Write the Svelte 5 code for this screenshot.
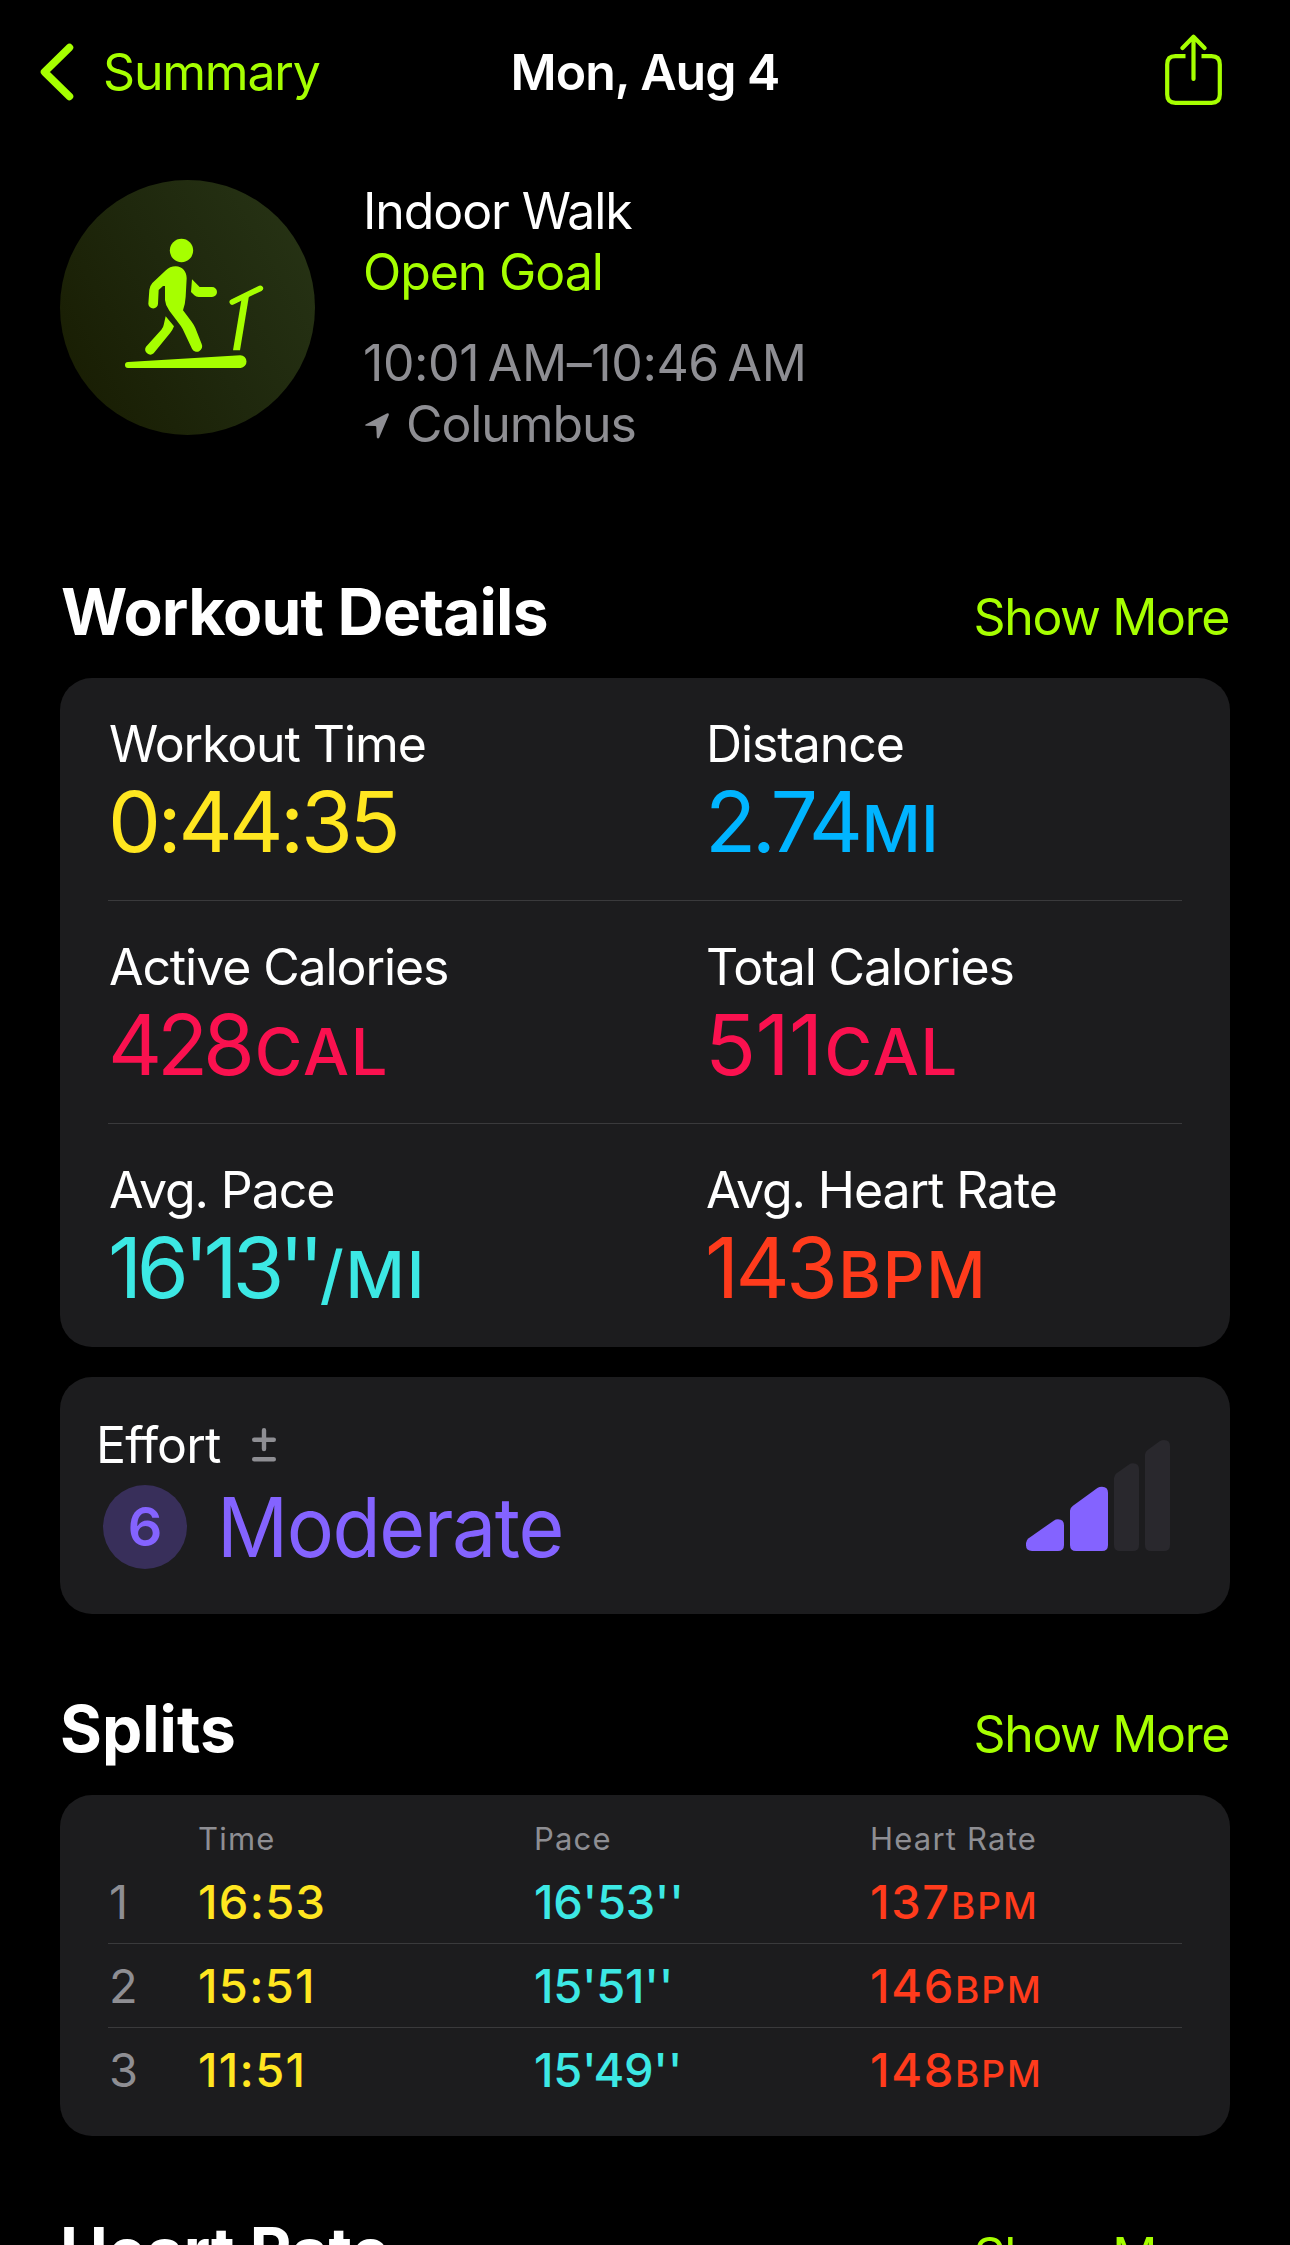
<script lang="ts">
  interface Metric {
    label: string;
    value: string;
    unit?: string;
    tone: string;
    tracking: number;
    gap?: number;
  }

  interface Split {
    time: string;
    pace: string;
    bpm: number;
  }

  const metrics: Metric[] = [
    { label: 'Workout Time', value: '0:44:35', tone: 'yellow', tracking: -3.4 },
    { label: 'Distance', value: '2.74', unit: 'MI', tone: 'blue', tracking: -4.4, gap: 3 },
    { label: 'Active Calories', value: '428', unit: 'CAL', tone: 'pink', tracking: -5.2, gap: 5 },
    { label: 'Total Calories', value: '511', unit: 'CAL', tone: 'pink', tracking: -0.6, gap: 2 },
    { label: 'Avg. Pace', value: "16'13''", unit: '/MI', tone: 'cyan', tracking: -5.3, gap: 1 },
    { label: 'Avg. Heart Rate', value: '143', unit: 'BPM', tone: 'red', tracking: -3.7, gap: 4 },
  ];

  const splits: Split[] = [
    { time: '16:53', pace: "16'53''", bpm: 137 },
    { time: '15:51', pace: "15'51''", bpm: 146 },
    { time: '11:51', pace: "15'49''", bpm: 148 },
  ];

  const effort = { score: 6, label: 'Moderate' };
  const effortBars = [
    { on: true, d: 'M216 573H294Q312 573 312 555V496Q312 478 294 478Q287 478 281 482L206 535Q198 541 198 549V556Q198 573 216 573Z' },
    { on: true, d: 'M348 573H426Q444 573 444 555V398Q444 380 426 380Q418 380 412 384L338 438Q330 444 330 452V555Q330 573 348 573Z' },
    { on: false, d: 'M480 573H519Q537 573 537 555V328Q537 310 519 310Q512 310 506 314L470 340Q462 346 462 354V555Q462 573 480 573Z' },
    { on: false, d: 'M573 573H612Q630 573 630 555V258Q630 240 612 240Q605 240 599 244L563 270Q555 276 555 284V555Q555 573 573 573Z' },
  ];
</script>

{#snippet sectionHead(title: string)}
  <div class="section-head">
    <h2 class:wide={title.length > 12}>{title}</h2>
    <a class="more" href="#more">Show More</a>
  </div>
{/snippet}

<div class="screen">
  <header class="nav">
    <a class="back" href="#summary">
      <svg width="34" height="58" viewBox="0 0 34 58" aria-hidden="true">
        <path d="M29.5 4.5 4.5 29l25 24.5" />
      </svg>
      <span>Summary</span>
    </a>
    <h1>Mon, Aug 4</h1>
    <button class="share" aria-label="Share">
      <svg width="57" height="72" viewBox="0 0 57 72" aria-hidden="true">
        <path d="M20.5 22.2H10.5Q2.2 22.2 2.2 30.5V60.5Q2.2 68.8 10.5 68.8H46.5Q54.8 68.8 54.8 60.5V30.5Q54.8 22.2 46.5 22.2H36.5" />
        <path class="arrow" d="M28.5 3V45M17.5 14 28.5 2.8 39.5 14" />
      </svg>
    </button>
  </header>

  <section class="hero">
    <div class="badge">
      <svg width="255" height="255" viewBox="60 60 765 765" aria-hidden="true">
        <circle cx="424.5" cy="271.5" r="35" />
        <!-- torso, near arm and front leg -->
        <path d="M407 319C427 319 440 335 440 355L437 410Q436 430 429 451L455 485Q461 493 466 504L485 552A16 16 0 0 1 456 566L428 507Q424 499 418 492L388 452Q376 436 375 420V378H369L356 390L354 431A14.5 14.5 0 0 1 325 431L328 390Q329 378 337 369L376 332Q390 319 407 319Z" />
        <!-- rear leg -->
        <path d="M377 469 402 499Q398 510 391 518L341 580A15.5 15.5 0 0 1 318 560L364 509Q370 502 371 495Z" />
        <!-- forward hand -->
        <path d="M456 358 479 381H516A15 15 0 0 1 516 411H476Q468 411 463 406L453 396Z" />
        <!-- treadmill -->
        <path class="rail" d="M577 426 661 385" />
        <path d="M605 415 627 407 600 571H579Z" />
        <path d="M264 606 601 585.5A19.3 19.3 0 0 1 602 624H264A9 9 0 0 1 264 606Z" />
      </svg>
    </div>
    <div class="summary">
      <p>Indoor Walk</p>
      <p class="goal">Open Goal</p>
      <p class="muted when">10:01&#8239;AM–10:46&#8239;AM</p>
      <p class="muted place">
        <svg width="24" height="26" viewBox="0 0 24 26" aria-hidden="true">
          <path d="M1 11.2 21.8.5Q24.4-.3 23.7 2.3L14.3 24.5Q13 26.500 11.8 24.5L11.3 14Q11.2 13 10.2 13L1 12.8Q-.8 12.2 1 11.2Z" />
        </svg>
        <span>Columbus</span>
      </p>
    </div>
  </section>

  {@render sectionHead('Workout Details')}
  <section class="card metrics">
    {#each metrics as m}
      <div class="metric">
        <div class="label">{m.label}</div>
        <div class="value {m.tone}">
          <span style="letter-spacing: {m.tracking}px">{m.value}</span>{#if m.unit}<span class="unit" class:long={m.unit.length > 2} style="margin-left: {m.gap}px">{m.unit}</span>{/if}
        </div>
      </div>
    {/each}
  </section>

  <section class="card effort">
    <div class="effort-main">
      <div class="effort-head">
        <span>Effort</span>
        <svg width="24" height="34" viewBox="0 0 24 34" aria-hidden="true">
          <path d="M2.2 11.7H21.8M12 2.3V21M2.2 31.2H21.8" />
        </svg>
      </div>
      <div class="effort-value">
        <span class="score">{effort.score}</span>
        <span class="level">{effort.label}</span>
      </div>
    </div>
    <svg width="144" height="111" viewBox="198 240 432 333" aria-hidden="true">
      {#each effortBars as bar}
        <path class="bar" class:on={bar.on} d={bar.d} />
      {/each}
    </svg>
  </section>

  {@render sectionHead('Splits')}
  <section class="card splits">
    <div class="split-row split-head">
      <span></span>
      <span>Time</span>
      <span>Pace</span>
      <span>Heart Rate</span>
    </div>
    {#each splits as s, i}
      <div class="split-row">
        <span class="index">{i + 1}</span>
        <span class="time yellow">{s.time}</span>
        <span class="pace cyan">{s.pace}</span>
        <span class="rate red">{s.bpm}<small>BPM</small></span>
      </div>
    {/each}
  </section>

  {@render sectionHead('Heart Rate')}
</div>

<style>
  :global(body) {
    background: #000;
  }

  .screen {
    --green: #a6ff00;
    --gray: #8e8e93;
    --violet: #8463ff;
    box-sizing: border-box;
    width: 1290px;
    height: 2245px;
    overflow: hidden;
    padding: 0 60px;
    background: #000;
    color: #fff;
    font-family: Inter, 'Liberation Sans', sans-serif;
    font-size: 50px;
    line-height: 60px;
    letter-spacing: -1.1px;
    white-space: nowrap;
  }

  h1,
  h2,
  p {
    margin: 0;
  }

  a {
    color: var(--green);
    text-decoration: none;
  }

  svg {
    display: block;
    flex-shrink: 0;
  }

  .yellow {
    color: #ffe620;
  }

  .blue {
    color: #00b4ff;
  }

  .pink {
    color: #fa114f;
  }

  .cyan {
    color: #3ce8e4;
  }

  .red {
    color: #ff3b1c;
  }

  .nav {
    display: grid;
    grid-template-columns: 1fr auto 1fr;
    align-items: center;
    height: 143px;
    margin: 0 -20px 37px;
  }

  .back {
    display: flex;
    align-items: center;
    gap: 29px;
    letter-spacing: -1.2px;
  }

  .back path {
    fill: none;
    stroke: var(--green);
    stroke-width: 7.5;
    stroke-linecap: round;
    stroke-linejoin: round;
  }

  h1 {
    font-size: 50px;
    font-weight: 600;
    letter-spacing: -1px;
  }

  .share {
    justify-self: end;
    margin: 0 28px 3px 0;
    padding: 0;
    border: 0;
    background: none;
  }

  .share path {
    fill: none;
    stroke: var(--green);
    stroke-width: 4.2;
  }

  .share .arrow {
    stroke-linecap: round;
    stroke-linejoin: round;
  }

  .hero {
    display: flex;
    gap: 48px;
    height: 274px;
    margin-bottom: 118px;
  }

  .badge {
    width: 255px;
    height: 255px;
    border-radius: 50%;
    background: linear-gradient(60deg, #191e03 10%, #1f280d 50%, #263214 90%);
  }

  .badge svg {
    fill: var(--green);
  }

  .badge .rail {
    stroke: var(--green);
    stroke-width: 17;
    stroke-linecap: round;
  }

  .summary {
    padding-top: 1px;
    line-height: 61px;
  }

  .goal {
    color: var(--green);
  }

  .muted {
    color: var(--gray);
  }

  .when {
    margin-top: 30px;
    letter-spacing: -0.4px;
  }

  .place {
    display: flex;
    align-items: center;
    gap: 17px;
    padding-left: 2px;
  }

  .place svg {
    margin-top: 2px;
    fill: var(--gray);
  }

  .section-head {
    display: flex;
    align-items: baseline;
    justify-content: space-between;
    height: 80px;
    margin-bottom: 26px;
  }

  h2 {
    font-size: 64px;
    font-weight: 700;
    line-height: 80px;
    letter-spacing: 0;
  }

  h2.wide {
    padding-left: 1px;
    letter-spacing: -0.8px;
  }

  .more {
    padding-right: 1px;
    letter-spacing: -1.4px;
  }

  .card {
    box-sizing: border-box;
    border-radius: 32px;
    background: #1c1c1e;
  }

  .metrics {
    display: grid;
    grid-template-columns: 597px 1fr;
    padding: 0 48px;
  }

  .metric {
    box-sizing: border-box;
    height: 223px;
    padding-top: 36px;
    border-bottom: 1px solid #3a3a3c;
  }

  .metric:nth-last-child(-n + 2) {
    border-bottom: 0;
  }

  .label {
    margin: 0 0 5px 1px;
  }

  .value {
    font-size: 84px;
    line-height: 85px;
    letter-spacing: 0;
  }

  .unit {
    font-size: 65px;
    font-weight: 500;
    line-height: 1;
    letter-spacing: 0;
  }

  .unit.long {
    letter-spacing: 1.8px;
  }

  .effort {
    display: flex;
    align-items: center;
    justify-content: space-between;
    height: 237px;
    margin: 30px 0 75px;
    padding: 0 60px 0 36px;
  }

  .effort-main {
    padding-bottom: 8px;
  }

  .effort-head {
    display: flex;
    align-items: center;
    gap: 31px;
    margin-bottom: 10px;
    letter-spacing: -0.85px;
  }

  .effort-head path {
    stroke: var(--gray);
    stroke-width: 4.4;
    stroke-linecap: round;
  }

  .effort-value {
    display: flex;
    align-items: center;
    gap: 30px;
    padding-left: 7px;
    color: var(--violet);
  }

  .score {
    width: 84px;
    height: 84px;
    border-radius: 50%;
    background: #382f5a;
    font-size: 54px;
    font-weight: 600;
    line-height: 84px;
    letter-spacing: 0;
    text-align: center;
  }

  .level {
    font-size: 83px;
    line-height: 84px;
    letter-spacing: -1.5px;
    transform: scaleX(0.949);
    transform-origin: left;
  }

  .bar {
    fill: #29282d;
  }

  .bar.on {
    fill: var(--violet);
  }

  .splits {
    height: 341px;
    margin-bottom: 75px;
    padding: 22px 48px 0;
  }

  .split-row {
    box-sizing: border-box;
    display: grid;
    grid-template-columns: 90px 336px 336px 1fr;
    height: 84px;
    border-bottom: 1px solid #3a3a3c;
    font-size: 47px;
    font-weight: 500;
    line-height: 83px;
  }

  .split-row:last-child {
    border-bottom: 0;
  }

  .split-head {
    height: 43px;
    border-bottom: 0;
    color: var(--gray);
    font-size: 31px;
    font-weight: 400;
    line-height: 43px;
    letter-spacing: 1.2px;
  }

  .index {
    padding-left: 1px;
    color: var(--gray);
    font-weight: 400;
  }

  .time {
    letter-spacing: 1.3px;
  }

  .pace {
    letter-spacing: -0.3px;
  }

  .rate {
    letter-spacing: 1.7px;
  }

  small {
    font-size: 37px;
    letter-spacing: 2px;
  }
</style>
